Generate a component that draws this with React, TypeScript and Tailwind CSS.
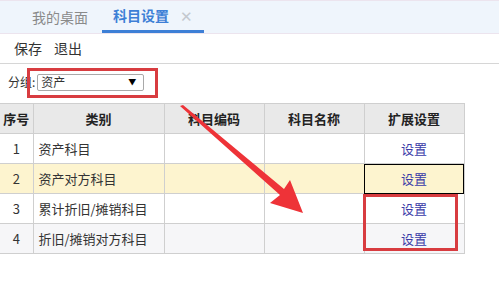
import React from "react";

const rows = [
  { no: 1, name: "资产科目", bg: "bg-white" },
  { no: 2, name: "资产对方科目", bg: "bg-[#fdf4cf]", selected: true },
  { no: 3, name: "累计折旧/摊销科目", bg: "bg-white" },
  { no: 4, name: "折旧/摊销对方科目", bg: "bg-[#f6f6f8]" },
];

export default function App() {
  return (
    <div
      className="relative w-[499px] h-[289px] overflow-hidden bg-white text-[#333]"
      style={{ fontFamily: '"Noto Sans CJK SC", "Noto Sans", sans-serif' }}
    >
      {/* tabs */}
      <div className="h-[34px] flex items-end bg-[#eff5fc] border-t border-[#d3d9e0] border-b border-[#ece4ee]">
        <div className="h-full flex items-center pl-[32px] pr-[14px] text-[14px] text-[#8a8a8a]">
          我的桌面
        </div>
        <div className="h-full flex items-center pl-[11px] pr-[11px] border-b-[3px] border-[#3d7fd6] text-[14px] font-bold text-[#3d7fd6]">
          <span>科目设置</span>
          <span className="ml-[11px] text-[15px] font-normal text-[#c3c8cf] leading-none">✕</span>
        </div>
      </div>

      {/* toolbar */}
      <div className="h-[30px] flex items-center gap-[12px] px-[14px] border-b border-[#d6d6d6] text-[14px]">
        <span>保存</span>
        <span>退出</span>
      </div>

      {/* filter */}
      <div className="h-[39px] flex items-center pl-[8px] pb-[3px] text-[12px]">
        <span>分组:</span>
        <div className="ml-[2px] w-[107px] h-[17px] flex items-center justify-between border border-[#a9a9a9] rounded-[2px] pl-[3px] pr-[7px]">
          <span>资产</span>
          <span className="text-[8px] text-black">▼</span>
        </div>
      </div>

      {/* table */}
      <table className="border-collapse text-[13px] table-fixed">
        <colgroup>
          <col className="w-[33px]" />
          <col className="w-[131px]" />
          <col className="w-[100px]" />
          <col className="w-[100px]" />
          <col className="w-[100px]" />
        </colgroup>
        <thead>
          <tr className="h-[30px] bg-[#e9e9e9] font-bold text-[#222]">
            <th className="border border-l-0 border-[#cfcfcf] px-0">序号</th>
            <th className="border border-[#cfcfcf]">类别</th>
            <th className="border border-[#cfcfcf]">科目编码</th>
            <th className="border border-[#cfcfcf]">科目名称</th>
            <th className="border border-[#cfcfcf]">扩展设置</th>
          </tr>
        </thead>
        <tbody>
          {rows.map((r) => (
            <tr key={r.no} className={`h-[30px] ${r.bg}`}>
              <td className="border border-l-0 border-[#cfcfcf] text-center">{r.no}</td>
              <td className="border border-[#cfcfcf] pl-[5px]">{r.name}</td>
              <td className="border border-[#cfcfcf]"></td>
              <td className="border border-[#cfcfcf]"></td>
              <td
                className={`border border-[#cfcfcf] text-center text-[#3a3aa8] ${
                  r.selected ? "outline outline-1 outline-black -outline-offset-1" : ""
                }`}
              >
                设置
              </td>
            </tr>
          ))}
        </tbody>
      </table>

      {/* annotations */}
      <div className="absolute left-[27px] top-[68px] w-[131px] h-[30px] border-[3px] border-[#d83c40]" />
      <div className="absolute left-[363px] top-[194px] w-[95px] h-[57px] border-[3px] border-[#d83c40]" />
      <svg className="absolute left-0 top-0" width="499" height="289">
        <polygon
          points="180,106 183,105 284,189 290,180 303,213 270,203 280,195"
          fill="#ee3338"
        />
      </svg>
    </div>
  );
}
